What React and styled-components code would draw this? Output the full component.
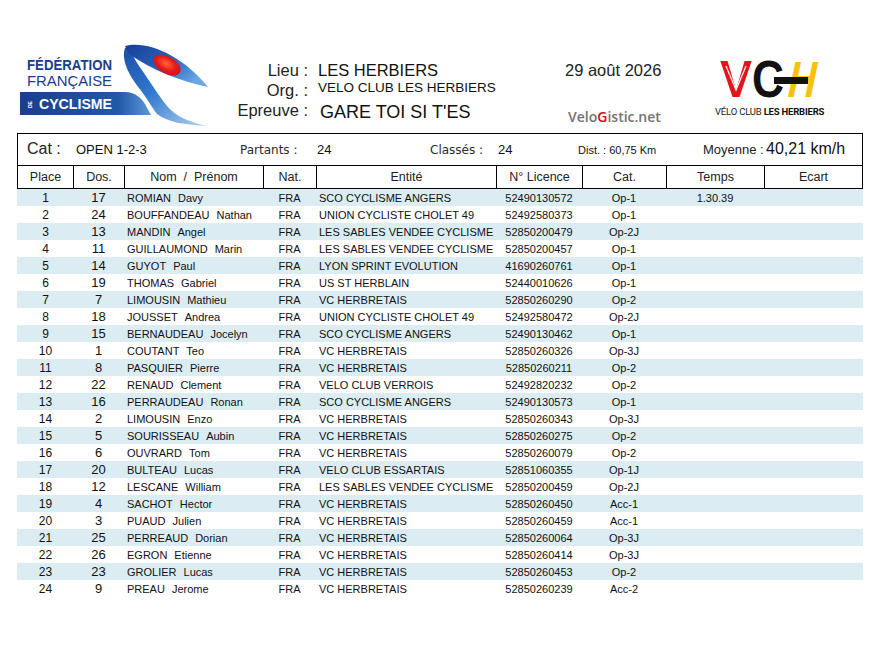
import React from "react";
import styled, { createGlobalStyle } from "styled-components";

const rows = [
  [1, 17, "ROMIAN", "Davy", "SCO CYCLISME ANGERS", "52490130572", "Op-1", "1.30.39"],
  [2, 24, "BOUFFANDEAU", "Nathan", "UNION CYCLISTE CHOLET 49", "52492580373", "Op-1"],
  [3, 13, "MANDIN", "Angel", "LES SABLES VENDEE CYCLISME", "52850200479", "Op-2J"],
  [4, 11, "GUILLAUMOND", "Marin", "LES SABLES VENDEE CYCLISME", "52850200457", "Op-1"],
  [5, 14, "GUYOT", "Paul", "LYON SPRINT EVOLUTION", "41690260761", "Op-1"],
  [6, 19, "THOMAS", "Gabriel", "US ST HERBLAIN", "52440010626", "Op-1"],
  [7, 7, "LIMOUSIN", "Mathieu", "VC HERBRETAIS", "52850260290", "Op-2"],
  [8, 18, "JOUSSET", "Andrea", "UNION CYCLISTE CHOLET 49", "52492580472", "Op-2J"],
  [9, 15, "BERNAUDEAU", "Jocelyn", "SCO CYCLISME ANGERS", "52490130462", "Op-1"],
  [10, 1, "COUTANT", "Teo", "VC HERBRETAIS", "52850260326", "Op-3J"],
  [11, 8, "PASQUIER", "Pierre", "VC HERBRETAIS", "52850260211", "Op-2"],
  [12, 22, "RENAUD", "Clement", "VELO CLUB VERROIS", "52492820232", "Op-2"],
  [13, 16, "PERRAUDEAU", "Ronan", "SCO CYCLISME ANGERS", "52490130573", "Op-1"],
  [14, 2, "LIMOUSIN", "Enzo", "VC HERBRETAIS", "52850260343", "Op-3J"],
  [15, 5, "SOURISSEAU", "Aubin", "VC HERBRETAIS", "52850260275", "Op-2"],
  [16, 6, "OUVRARD", "Tom", "VC HERBRETAIS", "52850260079", "Op-2"],
  [17, 20, "BULTEAU", "Lucas", "VELO CLUB ESSARTAIS", "52851060355", "Op-1J"],
  [18, 12, "LESCANE", "William", "LES SABLES VENDEE CYCLISME", "52850200459", "Op-2J"],
  [19, 4, "SACHOT", "Hector", "VC HERBRETAIS", "52850260450", "Acc-1"],
  [20, 3, "PUAUD", "Julien", "VC HERBRETAIS", "52850260459", "Acc-1"],
  [21, 25, "PERREAUD", "Dorian", "VC HERBRETAIS", "52850260064", "Op-3J"],
  [22, 26, "EGRON", "Etienne", "VC HERBRETAIS", "52850260414", "Op-3J"],
  [23, 23, "GROLIER", "Lucas", "VC HERBRETAIS", "52850260453", "Op-2"],
  [24, 9, "PREAU", "Jerome", "VC HERBRETAIS", "52850260239", "Acc-2"],
];

const columns = ["Place", "Dos.", "Nom  /  Prénom", "Nat.", "Entité", "N° Licence", "Cat.", "Temps", "Ecart"];

const COLS = "55px 51px 139px 53px 180px 86px 84px 98px 1fr";
const SANS = "Liberation Sans, Arial, sans-serif";

export default function App() {
  return (
    <>
      <GlobalStyle />
      <Page>
        <Header>
          <FfcLogo />
          <Info>
            <InfoRow>
              <Label>Lieu :</Label>
              <Value>LES HERBIERS</Value>
            </InfoRow>
            <InfoRow>
              <Label>Org. :</Label>
              <Value $small>VELO CLUB LES HERBIERS</Value>
            </InfoRow>
            <InfoRow>
              <Label>Epreuve :</Label>
              <Value $big>GARE TOI SI T'ES</Value>
            </InfoRow>
          </Info>
          <DateCol>
            <DateText>29 août 2026</DateText>
            <Brand>
              Velo<span>G</span>istic.net
            </Brand>
          </DateCol>
          <ClubCol>
            <VchMark />
            <ClubName>
              VÉLO CLUB <b>LES HERBIERS</b>
            </ClubName>
          </ClubCol>
        </Header>

        <Sheet>
          <CatRow>
            <CatLabel>Cat :</CatLabel>
            <CatValue>OPEN 1-2-3</CatValue>
            <StatLabel>Partants :</StatLabel>
            <CatValue>24</CatValue>
            <StatLabel>Classés :</StatLabel>
            <CatValue>24</CatValue>
            <Dist>Dist. : 60,75 Km</Dist>
            <Avg>Moyenne :</Avg>
            <AvgValue>40,21 km/h</AvgValue>
          </CatRow>
          <HeadRow>
            {columns.map((c) => (
              <HeadCell key={c}>{c}</HeadCell>
            ))}
          </HeadRow>
        </Sheet>

        <Body>
          {rows.map(([place, dos, nom, prenom, club, lic, cat, temps], i) => (
            <Row key={place} $striped={i % 2 === 0}>
              <Cell $center $place>{place}</Cell>
              <Cell $center $dos>{dos}</Cell>
              <Cell>
                {nom}
                <First>{prenom}</First>
              </Cell>
              <Cell $center>FRA</Cell>
              <Cell>{club}</Cell>
              <Cell $center>{lic}</Cell>
              <Cell $center>{cat}</Cell>
              <Cell $center>{temps || ""}</Cell>
              <Cell />
            </Row>
          ))}
        </Body>
      </Page>
    </>
  );
}

function FfcLogo() {
  return (
    <svg width="200" height="90" viewBox="0 0 200 90">
      <defs>
        <linearGradient id="band" x1="0" x2="1" y1="0" y2="0">
          <stop offset="0" stopColor="#1a3f8c" />
          <stop offset="0.75" stopColor="#2258a8" />
          <stop offset="1" stopColor="#5d9ad8" />
        </linearGradient>
        <linearGradient id="stem" x1="0" x2="1" y1="0" y2="1">
          <stop offset="0" stopColor="#1b4fa6" />
          <stop offset="0.45" stopColor="#3179cf" />
          <stop offset="1" stopColor="#b7d6f2" />
        </linearGradient>
        <linearGradient id="blob" x1="0" x2="1" y1="0" y2="0.6">
          <stop offset="0" stopColor="#153f94" />
          <stop offset="0.6" stopColor="#2866c0" />
          <stop offset="1" stopColor="#6aa6e4" />
        </linearGradient>
        <radialGradient id="red" cx="0.45" cy="0.45" r="0.65">
          <stop offset="0" stopColor="#ff6a2c" />
          <stop offset="0.55" stopColor="#e3181d" />
          <stop offset="1" stopColor="#c0141f" />
        </radialGradient>
      </defs>
      <path d="M3,52 L108,52 C118,52 124,58 128,64 L134,75 L3,75 Z" fill="url(#band)" />
      <path
        d="M108,8 C104,20 112,35 122,48 C130,58 134,66 140,74 C150,82 168,85 190,86 C172,82 158,76 150,66 C142,56 132,40 122,26 C117,18 114,12 112,8 Z"
        fill="url(#stem)"
      />
      <path d="M108,6 C130,0 165,15 191,47 C165,42 135,30 112,14 Z" fill="url(#blob)" />
      <ellipse cx="150" cy="25" rx="15" ry="8.5" transform="rotate(30 150 25)" fill="url(#red)" />
      <text x="10" y="30" fontFamily={SANS} fontWeight="700" fontSize="14.5" fill="#1a3d88" textLength="85" lengthAdjust="spacingAndGlyphs">
        FÉDÉRATION
      </text>
      <text x="10" y="46" fontFamily={SANS} fontSize="15" fill="#1a3d88" textLength="85" lengthAdjust="spacingAndGlyphs">
        FRANÇAISE
      </text>
      <text x="0" y="0" fontFamily={SANS} fontWeight="700" fontSize="5" fill="#fff" transform="translate(15 68) rotate(-90)">
        DE
      </text>
      <text x="22" y="69" fontFamily={SANS} fontWeight="700" fontSize="15" fill="#fff" textLength="73" lengthAdjust="spacingAndGlyphs">
        CYCLISME
      </text>
    </svg>
  );
}

function VchMark() {
  return (
    <svg width="122" height="44" viewBox="0 0 122 44" style={{ overflow: "visible", display: "block" }}>
      <text x="10" y="40" fontFamily={SANS} fontWeight="700" fontSize="51" fill="#e3161d" textLength="32" lengthAdjust="spacingAndGlyphs">
        V
      </text>
      <polyline points="16,9 26,33 36,9" fill="none" stroke="#fff" strokeWidth="1.2" />
      <text x="42" y="40" fontFamily={SANS} fontWeight="700" fontSize="51" fill="#121212" textLength="32" lengthAdjust="spacingAndGlyphs">
        C
      </text>
      <g transform="skewX(-12) translate(8 0)">
        <text x="76" y="40" fontFamily={SANS} fontWeight="700" fontSize="51" fill="#f5c30b" textLength="28" lengthAdjust="spacingAndGlyphs">
          H
        </text>
      </g>
      <rect x="64" y="20" width="34" height="7" fill="#121212" />
    </svg>
  );
}

const GlobalStyle = createGlobalStyle`
  html, body {
    margin: 0;
    background: #fff;
  }
  body {
    font-family: "Liberation Sans", Arial, sans-serif;
    color: #111;
  }
`;

const Page = styled.div`
  width: 879px;
  height: 669px;
  box-sizing: border-box;
  padding: 40px 16px 0 17px;
  overflow: hidden;
`;

const Header = styled.div`
  display: grid;
  grid-template-columns: 200px 343px 150px 1fr;
  height: 93px;
`;

const Info = styled.div`
  padding-top: 20px;
`;

const InfoRow = styled.div`
  display: grid;
  grid-template-columns: 91px 1fr;
  column-gap: 10px;
  height: 20px;
  align-items: start;
`;

const Label = styled.div`
  font-size: 16.5px;
  line-height: 20px;
  text-align: right;
  color: #222;
  white-space: pre;
`;

const Value = styled.div`
  font-size: ${(p) => (p.$big ? "18px" : p.$small ? "13.5px" : "16.5px")};
  line-height: ${(p) => (p.$small ? "16px" : "20px")};
  margin-top: ${(p) => (p.$big ? "2px" : "0")};
  padding-left: ${(p) => (p.$big ? "2px" : "0")};
  color: #111;
  white-space: nowrap;
`;

const DateCol = styled.div`
  display: flex;
  flex-direction: column;
  padding-top: 20px;
`;

const DateText = styled.div`
  font-size: 16.5px;
  line-height: 20px;
  padding-left: 5px;
  color: #222;
`;

const Brand = styled.div`
  margin-top: 28px;
  padding-left: 8px;
  font-family: "Open Sans", "Liberation Sans", sans-serif;
  font-weight: 600;
  font-size: 14px;
  line-height: 18px;
  color: #737373;

  span {
    color: #e30613;
  }
`;

const ClubCol = styled.div`
  display: flex;
  flex-direction: column;
  padding-top: 17px;
`;

const ClubName = styled.div`
  margin-top: 5px;
  padding-left: 5px;
  font-family: Roboto, "Liberation Sans", sans-serif;
  font-size: 9.5px;
  line-height: 11px;
  letter-spacing: -0.2px;
  color: #222;
  white-space: nowrap;

  b {
    font-weight: 700;
    color: #111;
  }
`;

const Sheet = styled.div`
  border: 1px solid #000;
  border-bottom: none;
`;

const CatRow = styled.div`
  display: grid;
  grid-template-columns: 49px 164px 77px 113px 68px 80px 125px 63px 1fr;
  align-items: baseline;
  height: 32px;
  box-sizing: border-box;
  padding: 6px 0 0 9px;
  border-bottom: 1px solid #000;
  white-space: nowrap;
`;

const CatLabel = styled.span`
  font-size: 16px;
  color: #222;
`;

const CatValue = styled.span`
  font-size: 13px;
  color: #111;
`;

const StatLabel = styled.span`
  font-family: "DejaVu Sans", Verdana, sans-serif;
  font-size: 12px;
  color: #2a2a2a;
`;

const Dist = styled.span`
  font-size: 11px;
  color: #111;
`;

const Avg = styled.span`
  font-size: 13px;
  color: #222;
`;

const AvgValue = styled.span`
  font-size: 16px;
  color: #111;
`;

const HeadRow = styled.div`
  display: grid;
  grid-template-columns: ${COLS};
  height: 22px;
  border-bottom: 1px solid #000;
`;

const HeadCell = styled.div`
  display: flex;
  align-items: center;
  justify-content: center;
  font-size: 12.5px;
  color: #222;
  white-space: pre;

  & + & {
    border-left: 1px solid #000;
  }
`;

const Body = styled.div`
  display: flex;
  flex-direction: column;
`;

const Row = styled.div`
  display: grid;
  grid-template-columns: ${COLS};
  height: 17px;
  align-items: center;
  padding: 0 1px;
  background: ${(p) => (p.$striped ? "#dbedf3" : "transparent")};
`;

const Cell = styled.div`
  font-size: ${(p) => (p.$dos ? "13px" : p.$place ? "12px" : "11px")};
  text-align: ${(p) => (p.$center ? "center" : "left")};
  padding-left: ${(p) => (p.$center ? "0" : "3px")};
  color: #111;
  white-space: nowrap;
  overflow: hidden;
`;

const First = styled.span`
  margin-left: 7px;
`;
